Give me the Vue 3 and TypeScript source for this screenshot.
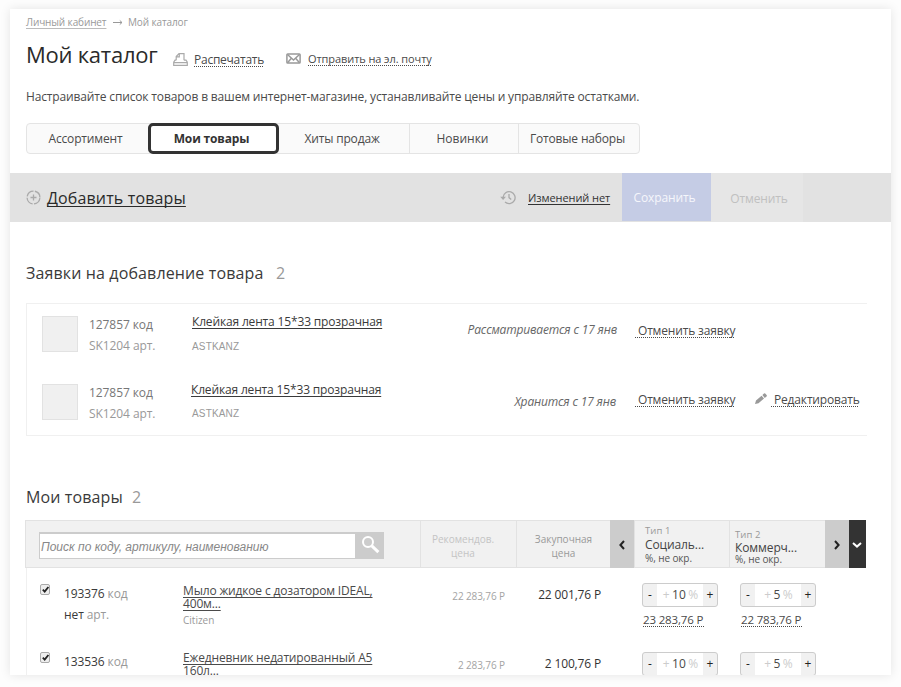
<script setup lang="ts">
interface Tab { label: string; cls: string }
interface Request { name: string; status: string; editable: boolean; cls: string }
interface Step { value: number; price: string }
interface Product {
  code: string
  art: string
  lines: string[]
  brand: string
  retail: string
  cost: string
  steps: Step[]
  cls: string
}

const tabs: Tab[] = [
  { label: 'Ассортимент', cls: 'assortment' },
  { label: 'Мои товары', cls: 'mine' },
  { label: 'Хиты продаж', cls: 'hits' },
  { label: 'Новинки', cls: 'fresh' },
  { label: 'Готовые наборы', cls: 'sets' },
]

const requests: Request[] = [
  { name: 'Клейкая лента 15*33 прозрачная', status: 'Рассматривается с 17 янв', editable: false, cls: 'pending' },
  { name: 'Клейкая лента 15*33 прозрачная', status: 'Хранится с 17 янв', editable: true, cls: 'stored' },
]

const products: Product[] = [
  {
    code: '193376',
    art: 'нет',
    lines: ['Мыло жидкое с дозатором IDEAL,', '400м...'],
    brand: 'Citizen',
    retail: '22 283,76 Р',
    cost: '22 001,76 Р',
    steps: [{ value: 10, price: '23 283,76 Р' }, { value: 5, price: '22 783,76 Р' }],
    cls: 'soap',
  },
  {
    code: '133536',
    art: '',
    lines: ['Ежедневник недатированный А5', '160л...'],
    brand: '',
    retail: '2 283,76 Р',
    cost: '2 100,76 Р',
    steps: [{ value: 10, price: '' }, { value: 5, price: '' }],
    cls: 'diary',
  },
]
</script>

<template>
  <div class="stage">
    <main class="panel">
      <nav class="crumbs">
        <a class="crumb-link">Личный кабинет</a>
        <svg class="crumb-arrow" viewBox="0 0 10 7"><path d="M0 3.5H9M6.8 1.5L9 3.5L6.8 5.5" /></svg>
        <span class="crumb-here">Мой каталог</span>
      </nav>

      <header class="title-row">
        <h1>Мой каталог</h1>
        <svg class="print" viewBox="0 0 15 13">
          <path d="M3.2 7.2V3.6L6 .7H11V7.2M6.3 .9V3.8H3.4M3.2 7.2H2L.7 9.2V12.3H14.3V9.2L13 7.2H11M.9 9.6H14.1" />
        </svg>
        <a class="dotted print-link">Распечатать</a>
        <svg class="mail" viewBox="0 0 15 11">
          <rect x=".9" y=".9" width="13.2" height="9.2" rx=".8" />
          <path d="M1.5 1.5L7.5 7L13.5 1.5M1.5 9.7L5.6 5M13.5 9.7L9.4 5" />
        </svg>
        <a class="dotted mail-link">Отправить на эл. почту</a>
      </header>

      <p class="intro">Настраивайте список товаров в вашем интернет-магазине, устанавливайте цены и управляйте остатками.</p>

      <div class="tabs">
        <button v-for="t in tabs" :key="t.cls" class="tab" :class="t.cls"><span>{{ t.label }}</span></button>
      </div>

      <section class="bar">
        <svg class="plus" viewBox="0 0 15 15">
          <circle cx="7.5" cy="7.5" r="6.4" stroke-dasharray="8.6 1.45" stroke-dashoffset="-.7" />
          <path d="M7.5 4.5V10.5M4.5 7.5H10.5" />
        </svg>
        <a class="add">Добавить товары</a>
        <svg class="history" viewBox="0 0 16 15">
          <path d="M3.1 7.2A6 6 0 1 1 5 12M9 4V7.6L11.2 9.6" />
          <path class="tip" d="M.2 6.7H6L3.1 10Z" />
        </svg>
        <a class="changes">Изменений нет</a>
        <button class="save"><span>Сохранить</span></button>
        <button class="cancel"><span>Отменить</span></button>
      </section>

      <h2 class="req-head"><span class="req-title">Заявки на добавление товара</span><span class="count">2</span></h2>
      <section class="requests">
        <div v-for="r in requests" :key="r.cls" class="request" :class="r.cls">
          <div class="thumb"></div>
          <div class="ids">
            <div class="code">127857 код</div>
            <div class="art">SK1204 арт.</div>
          </div>
          <div class="goods">
            <a class="goods-name">{{ r.name }}</a>
            <div class="vendor">ASTKANZ</div>
          </div>
          <div class="status">{{ r.status }}</div>
          <a class="dotted revoke">&nbsp;Отменить заявку</a>
          <template v-if="r.editable">
            <svg class="pencil" viewBox="0 0 12 11">
              <path d="M0 11L1 7.4L6.6 2.7L9 5.6L3.5 10.2ZM7.4 2L9 .6Q9.8 0 10.5 .7L11.6 2Q12.2 2.8 11.5 3.5L9.8 4.9Z" />
            </svg>
            <a class="dotted edit">&nbsp;Редактировать</a>
          </template>
        </div>
      </section>

      <h2 class="my-head"><span class="my-title">Мои товары</span><span class="count">2</span></h2>
      <section class="table">
        <div class="thead">
          <div class="search-cell">
            <div class="field">Поиск по коду, артикулу, наименованию</div>
            <div class="find">
              <svg viewBox="0 0 20 20"><circle cx="7" cy="7" r="5" /><path d="M10.8 10.8L17.4 17.2" /></svg>
            </div>
          </div>
          <div class="col retail-col">Рекомендов.<br>цена</div>
          <div class="col cost-col">Закупочная<br>цена</div>
          <div class="move"><svg viewBox="0 0 6 10"><path d="M5 1L1.4 5L5 9" /></svg></div>
          <div class="type one">
            <span class="kind">Тип 1</span>
            <span class="who">Социаль...</span>
            <span class="unit">%, не окр.</span>
          </div>
          <div class="type two">
            <span class="kind">Тип 2</span>
            <span class="who">Коммерч...</span>
            <span class="unit">%, не окр.</span>
          </div>
          <div class="move"><svg viewBox="0 0 6 10"><path d="M1 1L4.6 5L1 9" /></svg></div>
          <div class="more"><svg viewBox="0 0 10 6"><path d="M1 1L5 4.6L9 1" /></svg></div>
        </div>

        <div v-for="p in products" :key="p.code" class="product" :class="p.cls">
          <div class="check">
            <svg viewBox="0 0 10 10"><path d="M2 5.2L4.1 7.4L8.2 2.2" /></svg>
          </div>
          <div class="pids">
            <div>{{ p.code }} <i>код</i></div>
            <div v-if="p.art">{{ p.art }} <i>арт.</i></div>
          </div>
          <div class="pname">
            <a v-for="l in p.lines" :key="l">{{ l }}</a>
            <div v-if="p.brand" class="brand">{{ p.brand }}</div>
          </div>
          <div class="retail">{{ p.retail }}</div>
          <div class="cost">{{ p.cost }}</div>
          <div v-for="(s, i) in p.steps" :key="i" class="step-cell">
            <div class="stepper">
              <span class="side">-</span>
              <span class="value"><i>+</i> {{ s.value }} <i>%</i></span>
              <span class="side">+</span>
            </div>
            <a v-if="s.price" class="dotted sum">{{ s.price }}&nbsp;</a>
          </div>
        </div>
      </section>
    </main>
  </div>
</template>

<style>
body { background: #fdfdfd; }
</style>

<style scoped>
* { box-sizing: border-box; }
.stage {
  height: 687px;
  padding: 9px 10px 12px;
  overflow: hidden;
  font-family: "Open Sans", "Noto Sans", sans-serif;
  font-size: 12px;
  line-height: 16px;
  letter-spacing: -.16px;
  color: #4a4a4a;
  white-space: nowrap;
}
.panel {
  height: 666px;
  overflow: hidden;
  background: #fff;
  box-shadow: 0 0 10px rgba(0, 0, 0, .1);
}
h1, h2, p { margin: 0; font-weight: 400; }
i { font-style: normal; }
button { border: 0; padding: 0; font: inherit; letter-spacing: inherit; color: inherit; }
svg { display: block; flex: none; fill: none; stroke: #aaa; stroke-width: 1.3; }
a { text-decoration: underline; text-decoration-thickness: 1px; text-underline-offset: 2px; text-decoration-skip-ink: none; }
a.dotted { text-decoration-style: dotted; }

.crumbs { display: flex; height: 14px; margin: 6px 0 0 16px; font-size: 10px; line-height: 14px; letter-spacing: -.12px; color: #999; }
.crumb-link { width: 81px; text-decoration-color: #bbb; }
.crumb-arrow { width: 10px; height: 7px; margin: 4px 5px 0 6px; stroke-width: 1; stroke: #999; }

.title-row { display: flex; margin: 9px 0 0 16px; height: 35px; }
h1 { width: 147px; font-size: 22px; line-height: 32px; letter-spacing: -.25px; color: #2a2a2a; }
.print { width: 15px; height: 13px; margin-top: 15px; stroke-width: 1.2; }
.print-link { width: 71px; margin: 14px 21px 0 6px; letter-spacing: -.25px; }
.mail { width: 15px; height: 11px; margin-top: 15px; stroke: #999; stroke-width: 1.5; }
.mail-link { margin: 13px 0 0 7px; font-size: 11px; letter-spacing: -.08px; }

.intro { margin: 16px 0 0 16px; letter-spacing: -.15px; }

.tabs { display: flex; width: 614px; height: 31px; margin: 18px 0 0 16px; border: 1px solid #e4e4e4; border-radius: 4px; background: #fafafa; }
.tab { flex: none; height: 29px; background: transparent; border-right: 1px solid #e4e4e4; }
.assortment { width: 121px; padding-right: 4px; border-right: 0; }
.mine { width: 131px; height: 31px; margin-top: -1px; border: 3px solid #333; border-radius: 5px; background: #fff; font-weight: 700; color: #333; padding-right: 4px; }
.hits { width: 131px; padding-right: 4px; }
.fresh { width: 109px; padding-right: 3px; letter-spacing: 0; }
.sets { width: 119px; border-right: 0; padding-right: 2px; }

.bar { display: flex; height: 49px; margin-top: 19px; background: #e2e2e2; }
.plus { width: 15px; height: 15px; margin: 17px 6px 0 16px; }
.add { width: 140px; font-size: 16px; line-height: 24px; letter-spacing: .14px; margin-top: 13px; color: #2a2a2a; }
.history { width: 16px; height: 15px; margin: 17px 12px 0 313px; }
.tip { fill: #aaa; stroke: none; }
.changes { width: 94px; margin-top: 17px; font-size: 11px; letter-spacing: -.08px; color: #333; }
.save { width: 89px; height: 48px; background: #c5cce5; color: #f5f6fb; letter-spacing: -.1px; }
.cancel { width: 92px; background: #e6e6e6; color: #c0c0c0; letter-spacing: -.1px; }
.save span { position: relative; left: -2px; top: 1px; }
.cancel span { position: relative; left: 2px; top: 1px; }

h2 { display: flex; height: 24px; font-size: 16px; line-height: 24px; letter-spacing: .13px; margin-left: 16px; color: #3a3a3a; }
.count { color: #999; }
.req-head { margin-top: 39px; }
.req-title { width: 250px; }
.requests { width: 841px; height: 133px; margin: 18px 0 0 16px; border: 1px solid #f0f0f0; border-right: 0; }
.request { display: flex; height: 68px; padding: 12px 0 0 15px; }
.thumb { width: 36px; height: 36px; background: #f0f0f0; border: 1px solid #e2e2e2; }
.ids { width: 114px; padding: 1px 0 0 11px; letter-spacing: -.08px; }
.code { color: #777; }
.art { margin-top: 5px; color: #999; }
.goods { width: 195px; margin-top: -2px; }
.goods-name { display: block; color: #3a3a3a; }
.vendor { margin-top: 9px; font: 10px/16px "Liberation Sans", sans-serif; letter-spacing: .15px; color: #999; }
.status { width: 230px; margin-top: 6px; text-align: right; font-style: italic; color: #666; }
.revoke { margin: 7px 0 0 18px; width: 99px; }
.pencil { width: 12px; height: 11px; margin: 9px 4px 0 21px; fill: #999; stroke: none; }
.edit { margin-top: 7px; }
.stored .goods-name { margin-left: -1px; }
.stored .vendor { margin-top: 8px; }
.stored .status { margin-top: 10px; width: 229px; }
.stored .revoke { margin-top: 8px; margin-left: 19px; }
.stored .edit { margin-top: 8px; }

.my-head { margin-top: 49px; }
.my-title { width: 106px; }
.table { margin: 11px 0 0 15px; width: 842px; }
.thead { display: flex; width: 841px; height: 48px; background: #f1f1f1; letter-spacing: 0; }
.search-cell { display: flex; width: 395px; padding: 11px 0 0 13px; border: 1px solid #e2e2e2; border-right: 0; }
.field { width: 317px; height: 27px; padding-left: 1px; border: 1px solid #ccc; border-top-width: 2px; background: #fff; font: italic 12px/26px "Liberation Sans", sans-serif; color: #888; }
.find { width: 28px; height: 27px; background: #ccc; padding: 3px 0 0 5px; }
.find svg { width: 20px; height: 20px; stroke: #fff; stroke-width: 2; }
.find path { stroke-width: 3; }
.col { border: 1px solid #e2e2e2; border-right: 0; padding-top: 11px; text-align: center; font-size: 10px; line-height: 14px; }
.retail-col { width: 96px; color: #c4c4c4; padding-right: 11px; }
.cost-col { width: 94px; color: #999; }
.move { width: 24px; background: #ccc; padding: 20px 0 0 9px; }
.move svg { width: 6px; height: 10px; stroke: #222; stroke-width: 2; }
.more { width: 17px; background: #333; padding: 22px 0 0 3px; }
.more svg { width: 10px; height: 6px; stroke: #fff; stroke-width: 2; }
.type { display: flex; flex-direction: column; border: solid #e2e2e2; border-width: 1px 0 1px 1px; width: 96px; }
.one { width: 95px; padding: 3px 0 0 10px; }
.two { padding: 7px 0 0 5px; }
.kind { font-size: 9.5px; line-height: 14px; letter-spacing: .1px; color: #999; }
.who { line-height: 14px; color: #444; letter-spacing: -.1px; }
.unit { font-size: 10px; line-height: 12px; letter-spacing: -.1px; color: #555; }
.two .who { line-height: 12px; }
.two .unit { line-height: 10px; }

.product { display: flex; height: 68px; margin-left: 1px; border-left: 1px solid #f0f0f0; padding-top: 16px; }
.check { width: 10px; height: 11px; margin: 0 14px 0 13px; border: 1px solid #aaa; border-radius: 2px; background: #eee; }
.check svg { width: 9px; height: 9px; margin-left: -.5px; stroke: #222; stroke-width: 2; }
.pids { width: 119px; margin-top: -1px; line-height: 21px; letter-spacing: -.1px; color: #3a3a3a; }
.pids i { color: #999; }
.pname { width: 195px; line-height: 13px; }
.pname a { display: block; color: #4a4a4a; }
.brand { margin-top: 4px; font-size: 10px; letter-spacing: 0; color: #999; }
.retail { width: 127px; margin-top: 4px; text-align: right; font-size: 10px; letter-spacing: -.1px; color: #a4a4a4; }
.cost { width: 96px; margin-top: 3px; text-align: right; color: #333; }
.step-cell { margin-left: 41px; width: 76px; }
.step-cell + .step-cell { margin-left: 22px; }
.stepper { display: flex; height: 24px; margin-top: -1px; border: 1px solid #ccc; border-radius: 3px; background: #f1f1f1; line-height: 22px; letter-spacing: 0; }
.side { width: 14px; text-align: center; color: #222; }
.value { flex: 1; padding-left: 1px; text-align: center; background: #fff; word-spacing: -.7px; }
.value i { color: #ccc; }
.sum { display: block; margin: 5px 0 0 1px; font-size: 11.5px; }
.diary .pname { margin-top: -1px; }
.diary .retail { margin-top: 5px; }
.diary .cost { margin-top: 4px; }
.diary .stepper { margin-top: 0; }
</style>
